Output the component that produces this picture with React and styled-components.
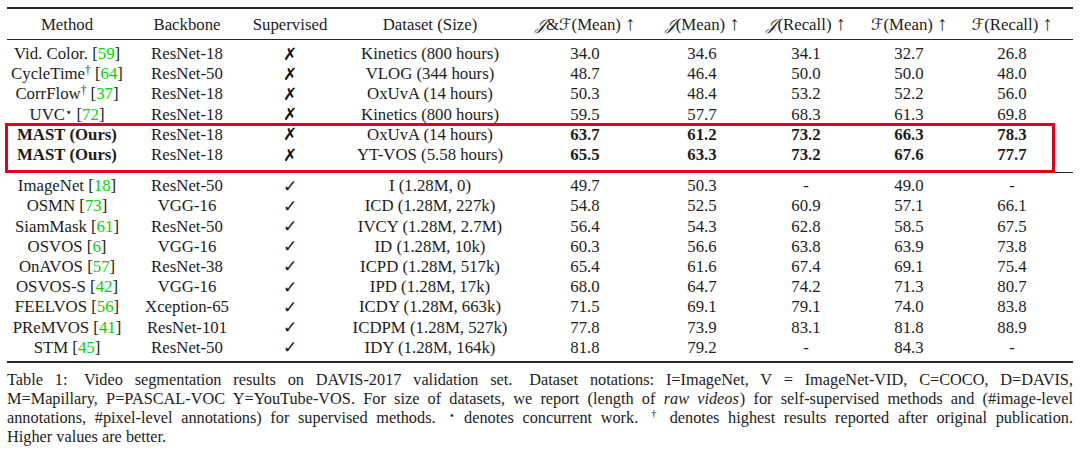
import React from "react";
import styled, { createGlobalStyle } from "styled-components";

const GlobalStyle = createGlobalStyle`
  html, body {
    margin: 0;
    padding: 0;
    background: #ffffff;
  }
  body {
    font-family: "Liberation Serif", "Times New Roman", serif;
    color: #1c1c1c;
  }
`;

const COLS = "120px 120px 86px 194px 116px 118px 90px 116px 90px";

const Page = styled.div`
  width: 1066px;
  padding: 7px 7px 0 7px;
`;

const Rule = styled.div`
  height: ${(p) => (p.$thick ? "1.6px" : "1px")};
  background: #262626;
`;

const Group = styled.div`
  padding: ${(p) => p.$pad || "0"};
`;

const Row = styled.div`
  display: grid;
  grid-template-columns: ${COLS};
  height: ${(p) => (p.$head ? "20px" : "20.2px")};
  align-items: center;
  font-size: 16.8px;
  line-height: 20px;
  white-space: nowrap;
`;

const Cell = styled.div`
  text-align: center;
  font-weight: ${(p) => (p.$bold ? 700 : 400)};
`;

const Cite = styled.span`
  color: #00d400;
`;

const Sup = styled.sup`
  font-family: "Liberation Serif", "Times New Roman", serif;
  font-size: 0.68em;
  vertical-align: 0;
  position: relative;
  top: -0.5em;
  line-height: 0;
  color: #1c1c1c;
`;

const Star = styled(Sup)`
  font-family: "DejaVu Sans", sans-serif;
  font-size: 0.7em;
  top: -0.35em;
`;

const Mark = styled.span`
  font-family: "DejaVu Sans", sans-serif;
  font-size: 17px;
  font-weight: 700;
  color: #111;
`;

const Cal = styled.span`
  font-family: "DejaVu Serif", "DejaVu Sans", serif;
  font-style: italic;
  font-size: 0.95em;
`;

const Arrow = styled.span`
  margin-left: 4px;
  font-family: "Liberation Serif", "Times New Roman", serif;
  font-size: 1.2em;
  line-height: 0;
  color: #1c1c1c;
`;

const Highlight = styled.div`
  position: relative;
  &::after {
    content: "";
    position: absolute;
    left: -2px;
    right: 18px;
    top: -1px;
    bottom: -8px;
    border: 3px solid #e0001b;
    pointer-events: none;
  }
`;

const Caption = styled.div`
  margin-top: 7px;
  font-family: "Liberation Serif", "Times New Roman", serif;
  font-size: 16.3px;
  line-height: 19px;
`;

const Line = styled.div`
  text-align: justify;
  text-align-last: ${(p) => (p.$last ? "left" : "justify")};
  white-space: nowrap;
`;

const Em = styled.i`
  padding-right: 1px;
`;

const Spacer = styled.span`
  display: inline-block;
  width: ${(p) => p.$w || "5px"};
`;

const unsup = [
  [<>Vid. Color. [<Cite>59</Cite>]</>, "ResNet-18", "Kinetics (800 hours)", ["34.0", "34.6", "34.1", "32.7", "26.8"]],
  [<>CycleTime<Sup>†</Sup> [<Cite>64</Cite>]</>, "ResNet-50", "VLOG (344 hours)", ["48.7", "46.4", "50.0", "50.0", "48.0"]],
  [<>CorrFlow<Sup>†</Sup> [<Cite>37</Cite>]</>, "ResNet-18", "OxUvA (14 hours)", ["50.3", "48.4", "53.2", "52.2", "56.0"]],
  [<>UVC<Star>⋆</Star> [<Cite>72</Cite>]</>, "ResNet-18", "Kinetics (800 hours)", ["59.5", "57.7", "68.3", "61.3", "69.8"]],
];

const ours = [
  ["ResNet-18", "OxUvA (14 hours)", ["63.7", "61.2", "73.2", "66.3", "78.3"]],
  ["ResNet-18", "YT-VOS (5.58 hours)", ["65.5", "63.3", "73.2", "67.6", "77.7"]],
];

const sup = [
  ["ImageNet", "18", "ResNet-50", "I (1.28M, 0)", ["49.7", "50.3", "-", "49.0", "-"]],
  ["OSMN", "73", "VGG-16", "ICD (1.28M, 227k)", ["54.8", "52.5", "60.9", "57.1", "66.1"]],
  ["SiamMask", "61", "ResNet-50", "IVCY (1.28M, 2.7M)", ["56.4", "54.3", "62.8", "58.5", "67.5"]],
  ["OSVOS", "6", "VGG-16", "ID (1.28M, 10k)", ["60.3", "56.6", "63.8", "63.9", "73.8"]],
  ["OnAVOS", "57", "ResNet-38", "ICPD (1.28M, 517k)", ["65.4", "61.6", "67.4", "69.1", "75.4"]],
  ["OSVOS-S", "42", "VGG-16", "IPD (1.28M, 17k)", ["68.0", "64.7", "74.2", "71.3", "80.7"]],
  ["FEELVOS", "56", "Xception-65", "ICDY (1.28M, 663k)", ["71.5", "69.1", "79.1", "74.0", "83.8"]],
  ["PReMVOS", "41", "ResNet-101", "ICDPM (1.28M, 527k)", ["77.8", "73.9", "83.1", "81.8", "88.9"]],
  ["STM", "45", "ResNet-50", "IDY (1.28M, 164k)", ["81.8", "79.2", "-", "84.3", "-"]],
];

const J = () => <Cal>𝒥</Cal>;
const F = () => <Cal>ℱ</Cal>;

function DataRow({ method, backbone, supervised, dataset, scores, bold }) {
  return (
    <Row>
      <Cell $bold={bold}>{method}</Cell>
      <Cell>{backbone}</Cell>
      <Cell>
        <Mark>{supervised ? "✓" : "✗"}</Mark>
      </Cell>
      <Cell>{dataset}</Cell>
      {scores.map((s, i) => (
        <Cell key={i} $bold={bold}>
          {s}
        </Cell>
      ))}
    </Row>
  );
}

export default function App() {
  return (
    <>
      <GlobalStyle />
      <Page>
        <Rule $thick />
        <Group $pad="6px 0 4px">
          <Row $head>
            <Cell>Method</Cell>
            <Cell>Backbone</Cell>
            <Cell>Supervised</Cell>
            <Cell>Dataset (Size)</Cell>
            <Cell>
              <J />&amp;<F />(Mean)<Arrow>↑</Arrow>
            </Cell>
            <Cell>
              <J />(Mean)<Arrow>↑</Arrow>
            </Cell>
            <Cell>
              <J />(Recall)<Arrow>↑</Arrow>
            </Cell>
            <Cell>
              <F />(Mean)<Arrow>↑</Arrow>
            </Cell>
            <Cell>
              <F />(Recall)<Arrow>↑</Arrow>
            </Cell>
          </Row>
        </Group>
        <Rule />
        <Group $pad="4px 0 7px">
          {unsup.map(([m, b, d, s], i) => (
            <DataRow key={i} method={m} backbone={b} dataset={d} scores={s} />
          ))}
          <Highlight>
            {ours.map(([b, d, s], i) => (
              <DataRow key={i} method="MAST (Ours)" backbone={b} dataset={d} scores={s} bold />
            ))}
          </Highlight>
        </Group>
        <Rule />
        <Group $pad="3px 0 4px">
          {sup.map(([m, c, b, d, s], i) => (
            <DataRow
              key={i}
              method={
                <>
                  {m} [<Cite>{c}</Cite>]
                </>
              }
              backbone={b}
              dataset={d}
              scores={s}
              supervised
            />
          ))}
        </Group>
        <Rule $thick />
        <Caption>
          <Line>
            Table 1:<Spacer $w="5px" /> Video segmentation results on DAVIS-2017 validation set.<Spacer $w="5px" /> Dataset notations: I=ImageNet, V = ImageNet-VID, C=COCO, D=DAVIS,
          </Line>
          <Line>
            M=Mapillary, P=PASCAL-VOC Y=YouTube-VOS. For size of datasets, we report (length of <Em>raw videos</Em>) for self-supervised methods and (#image-level
          </Line>
          <Line>
            annotations, #pixel-level annotations) for supervised methods.<Spacer $w="4px" /> <Star>⋆</Star> denotes concurrent work.<Spacer $w="4px" /> <Sup>†</Sup> denotes highest results reported after original publication.
          </Line>
          <Line $last>Higher values are better.</Line>
        </Caption>
      </Page>
    </>
  );
}
